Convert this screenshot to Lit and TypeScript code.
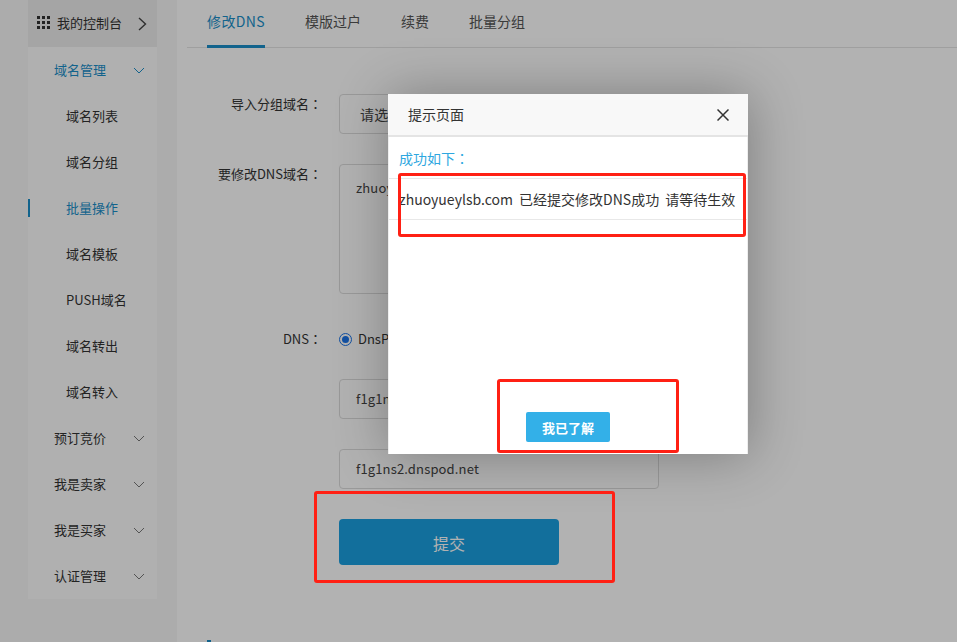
import { LitElement, css, html } from "lit";
import { customElement } from "lit/decorators.js";

const subItems = ["域名列表", "域名分组", "批量操作", "域名模板", "PUSH域名", "域名转出", "域名转入"];
const groups = ["预订竞价", "我是卖家", "我是买家", "认证管理"];
const tabs = ["修改DNS", "模版过户", "续费", "批量分组"];

const chevron = html`<svg class="chev" viewBox="0 0 12 7" width="12" height="7">
  <path d="M1 1l5 5 5-5" fill="none" stroke="currentColor" stroke-width="1" />
</svg>`;

// the reference has a centred full-width colon, which the TC face draws that way
const colon = html`<span class="colon">：</span>`;

@customElement("app-root")
export class AppRoot extends LitElement {
  static styles = css`
    :host {
      display: block;
      position: relative;
      width: 957px;
      height: 642px;
      overflow: hidden;
      background: #fff;
      color: #333;
      font: 13px/20px "Noto Sans CJK SC", "Noto Sans", sans-serif;
    }
    .colon {
      font-family: "Noto Sans CJK TC", sans-serif;
    }
    .page {
      display: flex;
      height: 642px;
    }
    .aside {
      flex: none;
      width: 177px;
      box-sizing: border-box;
      padding-left: 28px;
      background: #f7f7f7;
    }
    .menu {
      width: 129px;
      background: #fdfdfd;
    }
    .console {
      display: flex;
      align-items: center;
      height: 47px;
      padding: 0 0 2px 9px;
      box-sizing: border-box;
      background: #ececec;
    }
    .dots {
      display: grid;
      grid-template-columns: repeat(3, 3px);
      gap: 2px;
      margin-right: 7px;
    }
    .dots i {
      width: 3px;
      height: 3px;
      background: #333;
    }
    .console svg {
      margin: 2px 0 0 16px;
    }
    .group,
    .sub {
      display: flex;
      align-items: center;
      height: 46px;
    }
    .group {
      justify-content: space-between;
      padding: 0 12px 0 26px;
    }
    .group .chev {
      color: #777;
    }
    .group.open,
    .group.open .chev,
    .sub.on {
      color: #1a8fc9;
    }
    .sub {
      padding-left: 38px;
    }
    .sub.on {
      position: relative;
    }
    .sub.on::before {
      content: "";
      position: absolute;
      left: 0;
      top: 14px;
      width: 2px;
      height: 18px;
      background: #1a8fc9;
    }
    .main {
      flex: 1;
      padding-left: 10px;
    }
    .tabs {
      display: flex;
      gap: 40px;
      height: 48px;
      padding-left: 20px;
      border-bottom: 1px solid #e4e4e4;
      box-sizing: border-box;
      font-size: 14px;
    }
    .tab {
      height: 48px;
      box-sizing: border-box;
      padding-top: 11px;
      color: #555;
    }
    .tab.on {
      color: #1a8fc9;
      border-bottom: 3px solid #1a8fc9;
      letter-spacing: 0.4px;
    }
    .form {
      display: grid;
      grid-template-columns: 135px 320px;
      column-gap: 17px;
      padding-top: 46px;
      align-items: start;
    }
    .label {
      text-align: right;
      line-height: 20px;
    }
    .label.dns {
      padding-top: 5px;
    }
    .field {
      box-sizing: border-box;
      height: 40px;
      padding: 0 16px;
      border: 1px solid #dcdcdc;
      border-radius: 4px;
      line-height: 38px;
      color: #444;
      white-space: nowrap;
      overflow: hidden;
      letter-spacing: 0.15px;
    }
    .field.select {
      padding-left: 20px;
      margin-bottom: 30px;
      font-size: 14px;
    }
    .field.area {
      height: 130px;
      line-height: 20px;
      padding-top: 13px;
      margin-bottom: 30px;
    }
    .radio {
      display: flex;
      align-items: center;
      gap: 6px;
      height: 20px;
      margin: 0 0 30px;
      padding-top: 5px;
    }
    .radio-mark {
      box-sizing: border-box;
      width: 13px;
      height: 13px;
      border: 1px solid #1a73e8;
      border-radius: 50%;
      padding: 2px;
    }
    .radio-mark::after {
      content: "";
      display: block;
      width: 7px;
      height: 7px;
      border-radius: 50%;
      background: #1a73e8;
    }
    .field.stack {
      margin-bottom: 30px;
    }
    .submit {
      grid-column: 2;
      width: 220px;
      height: 46px;
      padding-top: 3px;
      border: 0;
      border-radius: 4px;
      background: #1a9fe0;
      color: #fff;
      font: 16px "Noto Sans CJK SC", sans-serif;
    }
    .notice {
      margin: 75px 0 0 20px;
      padding-left: 8px;
      font-weight: 700;
      font-size: 14px;
      border-left: 4px solid #1a8fc9;
      line-height: 20px;
    }
    .mask {
      position: absolute;
      inset: 0;
      background: rgba(0, 0, 0, 0.3);
    }
    .dialog {
      position: absolute;
      left: 388px;
      top: 94px;
      display: flex;
      flex-direction: column;
      width: 360px;
      height: 360px;
      background: #fff;
      box-shadow: 1px 1px 50px rgba(0, 0, 0, 0.3);
      font-size: 14px;
    }
    .head {
      display: flex;
      align-items: center;
      justify-content: space-between;
      flex: none;
      box-sizing: border-box;
      height: 43px;
      padding: 0 19px 2px 20px;
      background: #f8f8f8;
      border-bottom: 2px solid #e4e4e4;
    }
    .head svg {
      margin-top: 3px;
    }
    .body {
      display: flex;
      flex-direction: column;
      flex: 1;
      border: 1px solid #eee;
      border-width: 0 1px;
    }
    .ok {
      margin: 11px 0 0 10px;
      color: #2ea7e0;
    }
    .line {
      margin-top: 10px;
      height: 42px;
      box-sizing: border-box;
      padding-left: 10px;
      border-top: 1px solid #e8e8e8;
      border-bottom: 1px solid #e8e8e8;
      line-height: 40px;
      white-space: nowrap;
      word-spacing: 3px;
    }
    .foot {
      margin: auto 0 12px 137px;
    }
    .know {
      display: block;
      width: 84px;
      height: 30px;
      border: 0;
      border-radius: 2px;
      background: #33b0e8;
      color: #fff;
      font: 700 13px "Noto Sans CJK SC", sans-serif;
    }
    .mark {
      position: absolute;
      box-sizing: border-box;
      border: 3px solid #ff2014;
      border-radius: 3px;
    }
    .m1 {
      left: 398px;
      top: 173px;
      width: 348px;
      height: 64px;
    }
    .m2 {
      left: 497px;
      top: 379px;
      width: 182px;
      height: 74px;
    }
    .m3 {
      left: 314px;
      top: 491px;
      width: 301px;
      height: 92px;
    }
  `;

  render() {
    return html`
      <div class="page">
        <aside class="aside">
          <div class="menu">
            <div class="console">
              <span class="dots">${Array.from({ length: 9 }, () => html`<i></i>`)}</span>
              <span>我的控制台</span>
              <svg viewBox="0 0 9 14" width="9" height="14">
                <path d="M1 1l6.5 6L1 13" fill="none" stroke="#444" stroke-width="1.4" />
              </svg>
            </div>
            <div class="group open"><span>域名管理</span>${chevron}</div>
            ${subItems.map((s) => html`<div class="sub ${s === "批量操作" ? "on" : ""}">${s}</div>`)}
            ${groups.map((g) => html`<div class="group"><span>${g}</span>${chevron}</div>`)}
          </div>
        </aside>
        <main class="main">
          <nav class="tabs">
            ${tabs.map((t, i) => html`<div class="tab ${i === 0 ? "on" : ""}">${t}</div>`)}
          </nav>
          <section class="form">
            <div class="label">导入分组域名${colon}</div>
            <div class="field select">请选择分组</div>
            <div class="label">要修改DNS域名${colon}</div>
            <div class="field area">zhuoyueylsb.com</div>
            <div class="label dns">DNS${colon}</div>
            <div class="radio"><span class="radio-mark"></span><span>DnsPod</span></div>
            <div></div>
            <div class="field stack">f1g1ns1.dnspod.net</div>
            <div></div>
            <div class="field stack">f1g1ns2.dnspod.net</div>
            <button class="submit">提交</button>
          </section>
          <div class="notice">修改须知</div>
        </main>
      </div>
      <div class="mask"></div>
      <div class="dialog">
        <div class="head">
          <span>提示页面</span>
          <svg viewBox="0 0 12 12" width="12" height="12">
            <path d="M.5.5l11 11M11.5.5l-11 11" stroke="#333" stroke-width="1.5" fill="none" />
          </svg>
        </div>
        <div class="body">
          <div class="ok">成功如下${colon}</div>
          <div class="line">zhuoyueylsb.com 已经提交修改DNS成功 请等待生效</div>
          <div class="foot"><button class="know">我已了解</button></div>
        </div>
      </div>
      <div class="mark m1"></div>
      <div class="mark m2"></div>
      <div class="mark m3"></div>
    `;
  }
}
